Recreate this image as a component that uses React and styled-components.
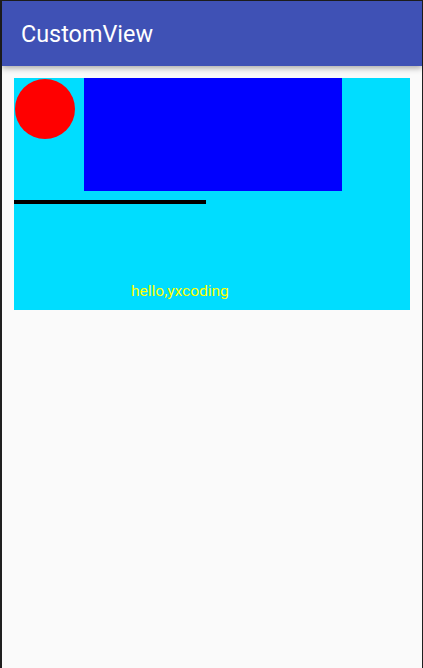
import React from 'react'
import styled, { createGlobalStyle } from 'styled-components'

const Global = createGlobalStyle`
  html, body {
    margin: 0;
    padding: 0;
    background: #1f1f1f;
  }
  body {
    font-family: Roboto, "Noto Sans", sans-serif;
  }
`

export default function App() {
  return (
    <>
      <Global />
      <Frame>
        <Screen>
          <AppBar>
            <Title>CustomView</Title>
          </AppBar>
          <Content>
            <Canvas>
              <Drawing width="396" height="232" viewBox="0 0 396 232">
                <circle cx="31" cy="31" r="30" fill="#ff0000" />
                <rect x="70" y="0" width="258" height="113" fill="#0000ff" />
                <rect x="0" y="122" width="192" height="4" fill="#000000" />
              </Drawing>
              <Hello>hello,yxcoding</Hello>
            </Canvas>
          </Content>
        </Screen>
      </Frame>
    </>
  )
}

const Frame = styled.div`
  padding: 1px 1px 0 2px;
  height: 668px;
  box-sizing: border-box;
`

const Screen = styled.div`
  background: #fafafa;
  height: 100%;
  display: flex;
  flex-direction: column;
`

const AppBar = styled.header`
  height: 65px;
  background: #3f51b5;
  display: flex;
  align-items: center;
  padding-left: 19px;
  box-shadow: 0 2px 6px rgba(0, 0, 0, 0.35);
  position: relative;
  z-index: 1;
`

const Title = styled.h1`
  margin: 0;
  color: #ffffff;
  font-size: 23.4px;
  font-weight: 400;
  letter-spacing: 0;
`

const Content = styled.main`
  padding: 12px 12px 0 12px;
`

const Canvas = styled.div`
  position: relative;
  height: 232px;
  background: #00ddff;
`

const Drawing = styled.svg`
  display: block;
`

const Hello = styled.span`
  position: absolute;
  left: 117px;
  top: 203px;
  color: #ffff00;
  font-size: 15.5px;
  line-height: 20px;
`
